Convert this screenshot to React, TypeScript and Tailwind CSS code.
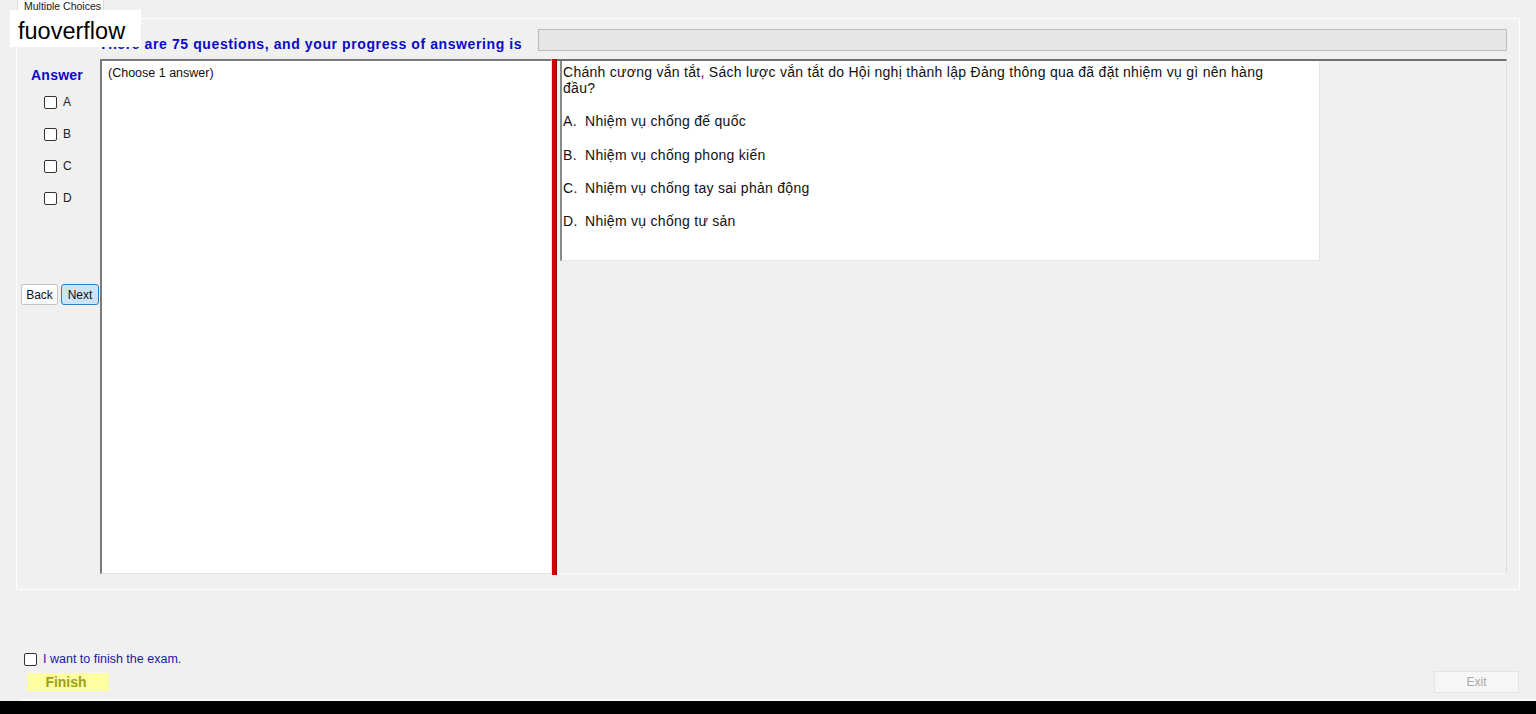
import React from 'react';

const options = [
    { key: 'A', text: 'Nhiệm vụ chống đế quốc', gap: 'mt-[17px]' },
    { key: 'B', text: 'Nhiệm vụ chống phong kiến', gap: 'mt-[18px]' },
    { key: 'C', text: 'Nhiệm vụ chống tay sai phản động', gap: 'mt-[17px]' },
    { key: 'D', text: 'Nhiệm vụ chống tư sản', gap: 'mt-[17px]' },
];

function Box({ className = '' }: { className?: string }) {
    return <span className={`block w-[13px] h-[13px] border border-[#333333] rounded-[2px] bg-white ${className}`} />;
}

export default function App() {
    return (
        <div className="relative w-[1536px] h-[714px] overflow-hidden bg-[#f0f0f0] flex flex-col font-['Liberation_Sans',Arial,sans-serif] text-black">
            {/* Tab strip */}
            <div className="h-[18px] pl-[17px] flex">
                <div className="w-[87px] h-[18px] overflow-hidden bg-[#fbfbfb] border-x border-[#dcdcdc]">
                    <span className="block pl-[6px] text-[10.5px] leading-[12px] text-[#222]">Multiple Choices</span>
                </div>
            </div>

            {/* Tab page */}
            <div className="ml-[16px] w-[1504px] h-[572px] border border-[#fdfdfd] flex flex-col">
                {/* Header */}
                <div className="h-[40px] pt-[10px] flex">
                    <div className="w-[521px] pl-[82px] pt-[7px]">
                        <span className="block text-[14px] leading-[16px] font-bold tracking-[0.6px] text-[#0a0ac8] whitespace-nowrap">
                            There are 75 questions, and your progress of answering is
                        </span>
                    </div>
                    <div className="w-[969px] h-[22px] bg-[#e6e6e6] border border-[#bcbcbc]" />
                </div>

                {/* Content */}
                <div className="h-[516px] flex">
                    {/* Sidebar */}
                    <div className="w-[83px] flex flex-col">
                        <div className="pt-[8px] pl-[14px] text-[14px] leading-[16px] font-bold tracking-[0.25px] text-[#0a0ac8]">Answer</div>
                        <div className="mt-[13px] pl-[27px] flex flex-col gap-[19px]">
                            {options.map((o) => (
                                <label key={o.key} className="h-[13px] flex items-center gap-[6px] text-[12px] leading-[13px] text-[#222]">
                                    <Box />
                                    {o.key}
                                </label>
                            ))}
                        </div>
                        <div className="mt-[79px] pl-[4px] flex gap-[3px]">
                            <button className="w-[37px] h-[21px] bg-[#fdfdfd] border border-[#c4c4c4] rounded-[2px] text-[12px] text-[#111]">Back</button>
                            <button className="w-[38px] h-[21px] bg-[#cce4f7] border border-[#2d7fc0] rounded-[3px] text-[12px] text-[#111]">Next</button>
                        </div>
                    </div>

                    {/* Answer box */}
                    <div className="w-[452px] h-[515px] bg-white border-t-2 border-l-2 border-t-[#7a7a7a] border-l-[#7a7a7a] border-r border-b border-r-[#e3e3e3] border-b-[#e3e3e3] pl-[6px] pt-[5px]">
                        <div className="text-[12.5px] leading-[14px] text-[#111]">(Choose 1 answer)</div>
                    </div>

                    {/* Splitter */}
                    <div className="w-[5px] h-[516px] bg-[#d20000] border-r border-[#9a0000]" />

                    {/* Question panel */}
                    <div className="w-[950px] h-[515px] border-t-2 border-t-[#6f6f6f] border-r border-r-[#dedede] border-b border-b-[#fafafa]">
                        <div className="ml-[3px] w-[760px] h-[200px] bg-white border-l-2 border-l-[#8a8a8a] border-r border-b border-r-[#e4e4e4] border-b-[#e4e4e4] pl-[1px] pt-[3px] text-[14px] leading-[16px] tracking-[0.28px] text-[#111]">
                            <p>
                                Chánh cương vắn tắt, Sách lược vắn tắt do Hội nghị thành lập Đảng thông qua đã đặt nhiệm vụ gì nên hàng
                                <br />
                                đầu?
                            </p>
                            {options.map((o) => (
                                <div key={o.key} className={`${o.gap} flex`}>
                                    <span className="w-[22px]">{o.key}.</span>
                                    <span>{o.text}</span>
                                </div>
                            ))}
                        </div>
                    </div>
                </div>
            </div>

            {/* Bottom controls */}
            <div className="h-[109px] flex justify-between items-end">
                <div className="pl-[24px] pb-[8px] flex flex-col">
                    <label className="h-[16px] flex items-center gap-[6px]">
                        <Box />
                        <span className="text-[12.5px] leading-[14px] text-[#1a1aa8]">I want to finish the exam.</span>
                    </label>
                    <button className="mt-[6px] ml-[3px] w-[82px] h-[18px] bg-[#fdfda2] text-[14px] leading-[18px] font-bold text-[#a0a012] pr-[4px]">Finish</button>
                </div>
                <div className="pr-[17px] pb-[6px]">
                    <button className="w-[85px] h-[22px] bg-[#f6f6f6] border border-[#e4e4e4] text-[12px] text-[#a8a8a8]">Exit</button>
                </div>
            </div>
            <div className="h-[2px] ml-[22px] bg-[#f9f9f9]" />
            <div className="h-[13px] bg-black" />

            {/* Watermark overlay */}
            <div className="absolute left-[10px] top-[10px] w-[131px] h-[37px] bg-white pl-[8px] pt-[3px] text-[23.5px] leading-[36px] text-black">fuoverflow</div>
        </div>
    );
}
